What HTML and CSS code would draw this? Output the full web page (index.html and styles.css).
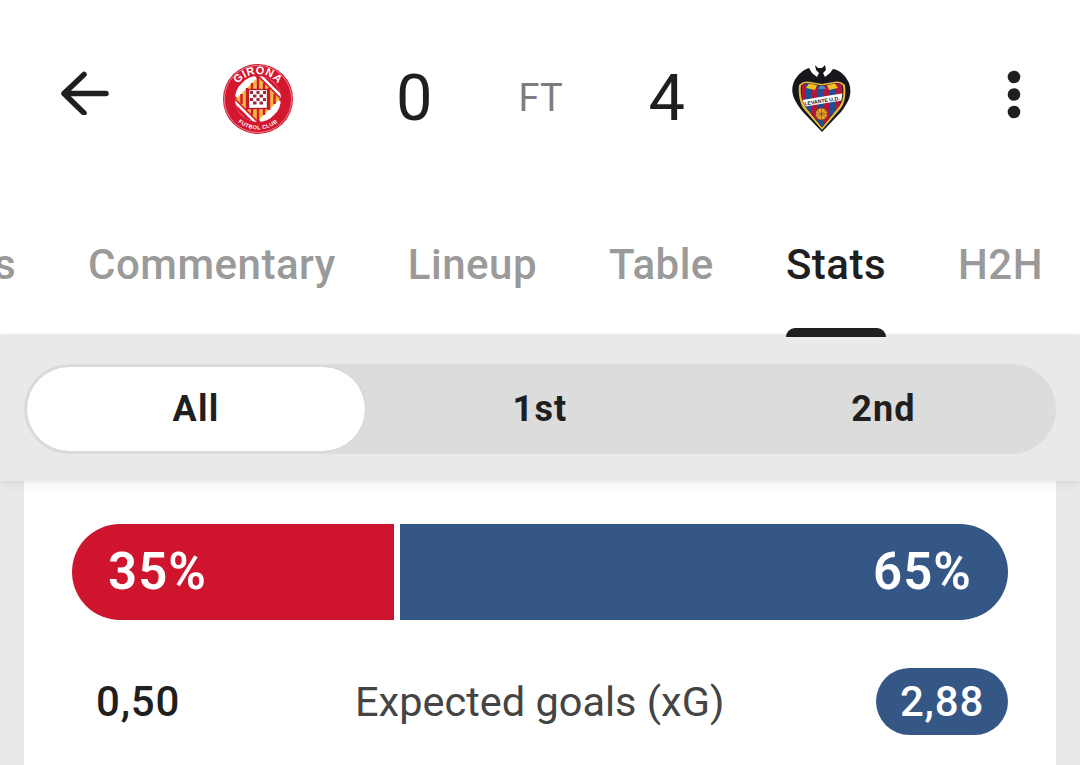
FILE: index.html
```html
<!DOCTYPE html>
<html lang="en">
<head>
<meta charset="utf-8">
<title>Girona 0 - 4 Levante</title>
<link rel="stylesheet" href="styles.css">
</head>
<body>
<div class="page">
  <header class="header">
    <svg class="back" viewBox="0 0 50 44" width="50" height="44"><path d="M46 22.500H4M24 3.500 4 22.500l20 19.500" fill="none" stroke="#1f1f1f" stroke-width="5.500" stroke-linecap="round" stroke-linejoin="round"/></svg>
    <svg class="crest-g" viewBox="0 0 72 72" width="72" height="72">
      <defs><clipPath id="g-inner"><circle cx="36" cy="36" r="23"/></clipPath></defs>
      <circle cx="36" cy="36" r="35" fill="#d3172e"/>
      <circle cx="36" cy="36" r="33.600" fill="none" stroke="#f3c9cd" stroke-width="0.600"/>
      <circle cx="36" cy="36" r="23" fill="#fff"/>
      <g clip-path="url(#g-inner)">
        <g stroke="#d3172e" stroke-width="3.200">
          <path d="M30 0 72 42M22 0 72 50M38 0 72 34M0 22 50 72M0 30 42 72M0 38 34 72"/>
          <path d="M0 30 30 0M0 38 38 0M42 72 72 42M34 72 72 34"/>
        </g>
      </g>
      <path d="M36 14 58 36 36 58 14 36Z" fill="#f5b93f"/>
      <path d="M25 25V47M30 20V52M42 20V52M47 25V47M19.500 31V41M52.500 31V41M36 14V58" stroke="#d3172e" stroke-width="2.400"/>
      <rect x="26.500" y="26.500" width="19" height="19" fill="#fff" stroke="#b41b2d" stroke-width="1.300"/>
      <path d="M28 28h3v3h-3zM34.500 28h3v3h-3zM41 28h3v3h-3zM31 31.500h3.500v3h-3.500zM37.500 31.500h3.500v3h-3.500zM28 35h3v3h-3zM34.500 35h3v3h-3zM41 35h3v3h-3zM31 38.500h3.500v3h-3.500zM37.500 38.500h3.500v3h-3.500z" fill="#9c2a37"/>
      <path id="g-top" d="M11 36a25 25 0 0 1 50 0" fill="none"/>
      <path id="g-bot" d="M5.500 36a30.500 30.500 0 0 0 61 0" fill="none"/>
      <text class="crest-top"><textPath href="#g-top" startOffset="50%" text-anchor="middle">GIRONA</textPath></text>
      <text class="crest-bot"><textPath href="#g-bot" startOffset="50%" text-anchor="middle">FUTBOL CLUB</textPath></text>
    </svg>
    <span class="score score-home">0</span>
    <span class="status">FT</span>
    <span class="score score-away">4</span>
    <svg class="crest-l" viewBox="0 0 60 70" width="60" height="70">
      <defs><clipPath id="l-shield"><path d="M10 21c3-2 6-2 9-1l11 2 11-2c3-1 6-1 9 1 1 9 0 15-3 21L30 63 13 42C10 36 9 30 10 21z"/></clipPath></defs>
      <path d="M23 1l3 3h4l3-3 1 5-3 3 2 4 5-4 3-4c7 1 13 7 16 14 2 6 2 12-1 18-2 4-4 7-7 11L30 68 11 48C7 43 4 39 2 34-1 27 0 20 4 14 8 9 11 6 17 4l3 5 5 4 2-4-3-3z" fill="#17171b"/>
      <path d="M7 21c4-4 8-4 12-3l11 2 11-2c4-1 8-1 12 3 1 10 0 17-4 23L30 66 11 44C8 38 6 31 7 21z" fill="#e9bd3b"/>
      <path d="M9 21.500c3-3 7-3 10-2l11 2 11-2c3-1 7-1 10 2 1 9 0 16-4 21L30 63.500 13 42.500C10 37 8 30 9 21.500z" fill="#17171b"/>
      <g clip-path="url(#l-shield)">
        <rect x="8" y="18" width="44" height="48" fill="#b3163a"/>
        <path d="M13 18h6v48h-6zM25 18h6v48h-6zM37 18h6v48h-6z" fill="#1f4f93"/>
        <path d="M14 24l4-6 7 3-2 5zM46 24l-4-6-7 3 2 5z" fill="#f2c21f"/>
        <path d="M26 25l4-6 4 6z" fill="#4d8ac2"/>
        <path d="M8 36.500 52 29v7L8 43.500z" fill="#fff"/>
      </g>
      <text class="crest-name" x="30" y="38.700" transform="rotate(-9 30 37)">LEVANTE U.D.</text>
      <circle cx="29.500" cy="50" r="6" fill="#f0a52e" stroke="#6d4512" stroke-width="0.800"/>
      <path d="M29.500 44.500v11M24 50h11M25.500 46.500l8 7M33.500 46.500l-8 7" stroke="#6d4512" stroke-width="0.600"/>
    </svg>
    <svg class="more" viewBox="0 0 14 50" width="14" height="50"><circle cx="7" cy="7" r="6.300" fill="#1f1f1f"/><circle cx="7" cy="24.500" r="6.300" fill="#1f1f1f"/><circle cx="7" cy="42" r="6.300" fill="#1f1f1f"/></svg>
  </header>

  <nav class="tabs">
    <span class="tab">Facts</span>
    <span class="tab">Commentary</span>
    <span class="tab">Lineup</span>
    <span class="tab">Table</span>
    <span class="tab tab-active">Stats</span>
    <span class="tab">H2H</span>
  </nav>

  <section class="filter">
    <div class="segments">
      <span class="segment segment-active">All</span>
      <span class="segment segment-first">1st</span>
      <span class="segment segment-second">2nd</span>
    </div>
  </section>

  <main class="content">
    <div class="card">
      <div class="possession">
        <div class="poss poss-home">35%</div>
        <div class="poss poss-away">65%</div>
      </div>
      <div class="stat-row">
        <span class="stat-home">0,50</span>
        <span class="stat-label">Expected goals (xG)</span>
        <span class="stat-badge">2,88</span>
      </div>
    </div>
  </main>
</div>
</body>
</html>
```
FILE: styles.css
```css
* { box-sizing: border-box; }
html, body { margin: 0; padding: 0; background: #fff; }
.page {
  width: 1080px;
  height: 765px;
  overflow: hidden;
  display: flex;
  flex-direction: column;
  font-family: Roboto, "Liberation Sans", sans-serif;
  color: #1f1f1f;
}
.header {
  height: 195px;
  flex: none;
  display: flex;
  align-items: flex-start;
  padding-top: 63px;
}
.back { margin: 8px 0 0 60px; flex: none; }
.crest-g { margin: 0 0 0 112px; flex: none; }
.crest-top { font: 700 11px "Liberation Sans", sans-serif; fill: #fff; letter-spacing: .4px; }
.crest-bot { font: 700 5.500px "Liberation Sans", sans-serif; fill: #fff; letter-spacing: .4px; }
.crest-name { font: 700 5.200px "Liberation Sans", sans-serif; fill: #17171b; text-anchor: middle; }
.score { font-size: 65px; line-height: 70px; font-weight: 400; flex: none; }
.score-home { margin-left: 102px; }
.status { font-size: 38px; line-height: 70px; color: #7d7d7d; margin-left: 86px; flex: none; }
.score-away { margin-left: 86px; }
.crest-l { margin: 1px 0 0 107px; flex: none; }
.more { margin: 7px 0 0 155px; flex: none; }

.tabs {
  height: 139px;
  flex: none;
  display: flex;
  align-items: flex-start;
  gap: 72px;
  margin-left: -89px;
  padding-top: 46px;
  white-space: nowrap;
  position: relative;
  z-index: 2;
}
.tab {
  position: relative;
  font-size: 42px;
  letter-spacing: .5px;
  line-height: 48px;
  font-weight: 500;
  color: #9a9a9a;
}
.tab-active { color: #1f1f1f; }
.tab-active::after {
  content: "";
  position: absolute;
  left: 0;
  right: 0;
  top: 87px;
  height: 9px;
  background: #1f1f1f;
  border-radius: 9px 9px 0 0;
}

.filter {
  height: 147px;
  flex: none;
  background: #e9e9e9;
  padding: 30px 24px 0;
  box-shadow: 0 3px 9px -1px rgba(0,0,0,.1);
  position: relative;
  z-index: 1;
}
.segments {
  height: 90px;
  border-radius: 45px;
  background: #dcdcdc;
  display: flex;
  align-items: center;
  padding: 3px;
}
.segment {
  font-size: 36px;
  font-weight: 700;
  letter-spacing: 1.200px;
  line-height: 84px;
  text-align: center;
  color: #1f1f1f;
  height: 84px;
  flex: none;
}
.segment-active {
  width: 338px;
  background: #fff;
  border-radius: 42px;
  box-shadow: 0 0 2px rgba(0,0,0,.1);
}
.segment-first { width: 350px; }
.segment-second { width: 337px; }

.content {
  flex: 1;
  background: #e9e9e9;
  padding: 0 24px;
}
.card {
  background: #fff;
  height: 100%;
  padding: 43px 48px 0;
}
.possession { display: flex; gap: 6px; height: 96px; }
.poss {
  color: #fff;
  font-size: 51px;
  letter-spacing: 1px;
  font-weight: 600;
  line-height: 96px;
}
.poss-home {
  width: 322px;
  background: #ce152d;
  border-radius: 48px 0 0 48px;
  padding-left: 36px;
}
.poss-away {
  flex: 1;
  background: #355785;
  border-radius: 0 48px 48px 0;
  padding-right: 36px;
  text-align: right;
}
.stat-row {
  margin-top: 48px;
  height: 67px;
  display: flex;
  align-items: center;
}
.stat-home { width: 283px; padding-left: 24px; font-size: 42px; letter-spacing: .8px; font-weight: 500; }
.stat-label { width: 521px; font-size: 41.500px; color: #444; }
.stat-badge {
  width: 132px;
  height: 67px;
  border-radius: 34px;
  background: #355785;
  color: #fff;
  font-size: 42px;
  letter-spacing: .8px;
  font-weight: 500;
  line-height: 67px;
  text-align: center;
}
```
